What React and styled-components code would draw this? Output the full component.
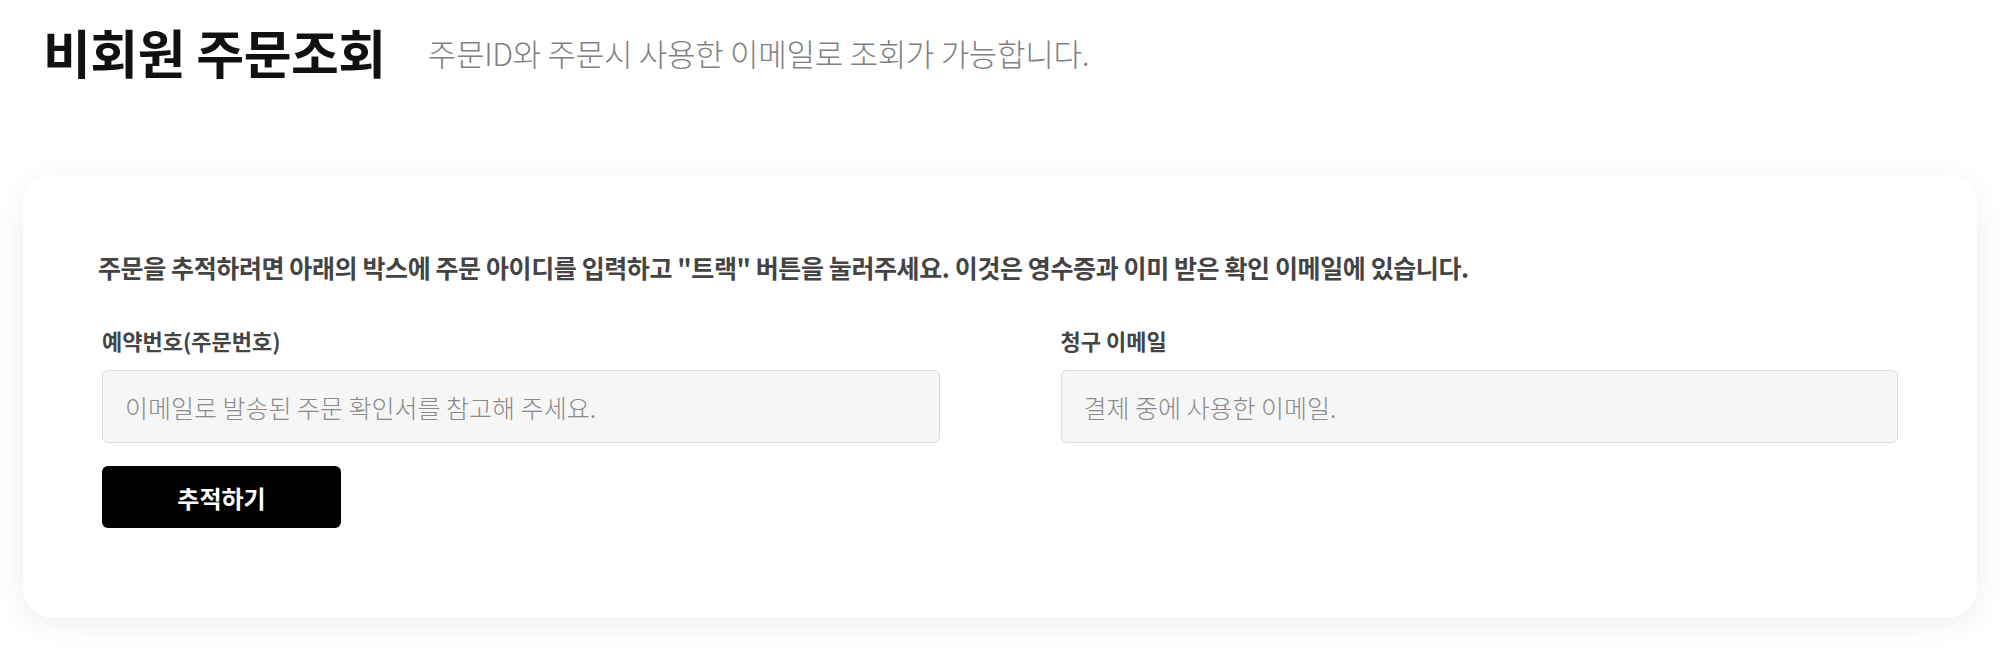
import React from 'react';
import styled, { createGlobalStyle } from 'styled-components';

const GlobalStyle = createGlobalStyle`
    html, body {
        margin: 0;
        padding: 0;
        background: #ffffff;
    }
    body {
        font-family: "Noto Sans CJK KR", "Noto Sans", sans-serif;
        color: #222;
    }
    * {
        box-sizing: border-box;
    }
`;

const Page = styled.div`
    padding: 25px 23px 40px;
`;

const Header = styled.div`
    display: flex;
    align-items: center;
    gap: 42px;
    padding-left: 20px;
`;

const Title = styled.h1`
    margin: 0;
    font-size: 52px;
    line-height: 1.05;
    font-weight: 700;
    color: #111;
    letter-spacing: -0.5px;
`;

const Subtitle = styled.p`
    margin: 0;
    font-size: 31px;
    line-height: 1;
    font-weight: 300;
    color: #808080;
    letter-spacing: -0.3px;
`;

const Card = styled.section`
    margin-top: 95px;
    background: #fff;
    border-radius: 30px;
    box-shadow: 0 6px 30px rgba(0, 0, 0, 0.07);
    padding: 75px 79px 90px 75px;
`;

const Notice = styled.p`
    margin: 0;
    font-size: 25px;
    line-height: 1.4;
    font-weight: 600;
    color: #444;
    letter-spacing: -0.4px;
`;

const Fields = styled.div`
    display: grid;
    grid-template-columns: 1fr 1fr;
    column-gap: 121px;
    margin-top: 40px;
    padding-left: 4px;
`;

const Field = styled.div`
    display: flex;
    flex-direction: column;
    align-items: flex-start;
`;

const Label = styled.label`
    font-size: 22px;
    line-height: 1.4;
    font-weight: 600;
    color: #444;
`;

const Input = styled.input`
    margin-top: 15px;
    width: 100%;
    height: 73px;
    padding: 0 22px;
    background: #f6f6f6;
    border: 1px solid #dcdcdc;
    border-radius: 6px;
    font-family: inherit;
    font-size: 25px;
    font-weight: 300;
    color: #333;
    outline: none;

    &::placeholder {
        color: #8a8a8a;
    }
`;

const TrackButton = styled.button`
    margin-top: 23px;
    width: 239px;
    height: 62px;
    border: none;
    border-radius: 6px;
    background: #000;
    color: #fff;
    font-family: inherit;
    font-size: 24px;
    font-weight: 700;
    cursor: pointer;
`;

export default function App() {
    return (
        <>
            <GlobalStyle />
            <Page>
                <Header>
                    <Title>비회원 주문조회</Title>
                    <Subtitle>주문ID와 주문시 사용한 이메일로 조회가 가능합니다.</Subtitle>
                </Header>
                <Card>
                    <Notice>
                        주문을 추적하려면 아래의 박스에 주문 아이디를 입력하고 "트랙" 버튼을 눌러주세요. 이것은 영수증과 이미 받은 확인 이메일에 있습니다.
                    </Notice>
                    <Fields>
                        <Field>
                            <Label htmlFor="order-id">예약번호(주문번호)</Label>
                            <Input id="order-id" placeholder="이메일로 발송된 주문 확인서를 참고해 주세요." />
                            <TrackButton type="button">추적하기</TrackButton>
                        </Field>
                        <Field>
                            <Label htmlFor="billing-email">청구 이메일</Label>
                            <Input id="billing-email" placeholder="결제 중에 사용한 이메일." />
                        </Field>
                    </Fields>
                </Card>
            </Page>
        </>
    );
}
